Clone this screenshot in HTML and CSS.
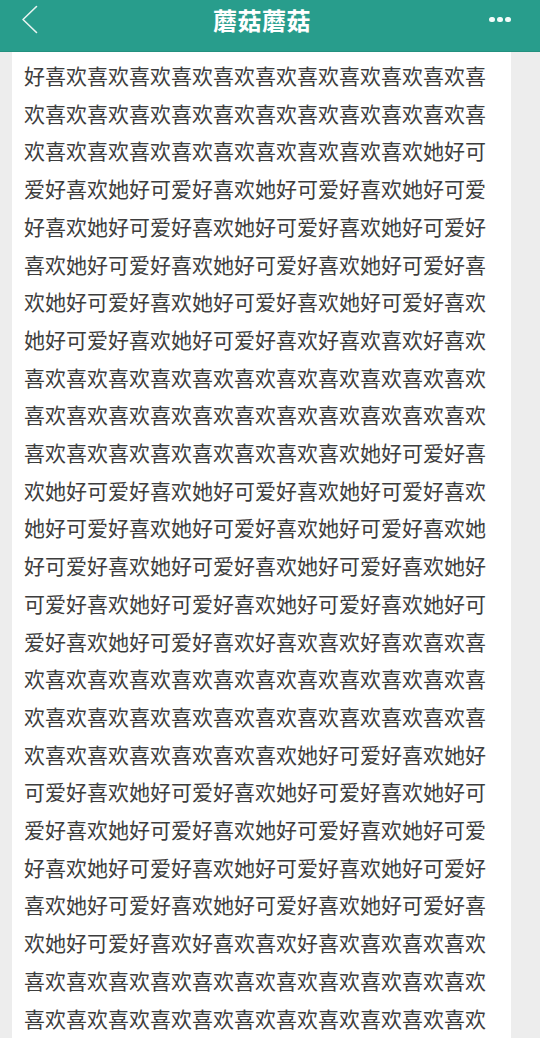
FILE: index.html
```html
<!DOCTYPE html>
<html lang="zh-CN">
<head>
<meta charset="utf-8">
<title>蘑菇蘑菇</title>
<link rel="stylesheet" href="styles.css">
</head>
<body>
<header class="topbar">
  <a class="back" href="#" aria-label="返回">
    <svg width="18" height="30" viewBox="0 0 18 30"><path d="M15.5 1.5 L2 14.5 L15.5 27.5" fill="none" stroke="#e8f4f1" stroke-width="1.6" stroke-linecap="round" stroke-linejoin="round"/></svg>
  </a>
  <h1 class="title">蘑菇蘑菇</h1>
  <div class="more" aria-label="更多"><span></span><span></span><span></span></div>
</header>
<main class="page">
  <article class="card">
    <p class="content">
      <span class="line">好喜欢喜欢喜欢喜欢喜欢喜欢喜欢喜欢喜欢喜欢喜</span>
      <span class="line">欢喜欢喜欢喜欢喜欢喜欢喜欢喜欢喜欢喜欢喜欢喜</span>
      <span class="line">欢喜欢喜欢喜欢喜欢喜欢喜欢喜欢喜欢喜欢她好可</span>
      <span class="line">爱好喜欢她好可爱好喜欢她好可爱好喜欢她好可爱</span>
      <span class="line">好喜欢她好可爱好喜欢她好可爱好喜欢她好可爱好</span>
      <span class="line">喜欢她好可爱好喜欢她好可爱好喜欢她好可爱好喜</span>
      <span class="line">欢她好可爱好喜欢她好可爱好喜欢她好可爱好喜欢</span>
      <span class="line">她好可爱好喜欢她好可爱好喜欢好喜欢喜欢好喜欢</span>
      <span class="line">喜欢喜欢喜欢喜欢喜欢喜欢喜欢喜欢喜欢喜欢喜欢</span>
      <span class="line">喜欢喜欢喜欢喜欢喜欢喜欢喜欢喜欢喜欢喜欢喜欢</span>
      <span class="line">喜欢喜欢喜欢喜欢喜欢喜欢喜欢喜欢她好可爱好喜</span>
      <span class="line">欢她好可爱好喜欢她好可爱好喜欢她好可爱好喜欢</span>
      <span class="line">她好可爱好喜欢她好可爱好喜欢她好可爱好喜欢她</span>
      <span class="line">好可爱好喜欢她好可爱好喜欢她好可爱好喜欢她好</span>
      <span class="line">可爱好喜欢她好可爱好喜欢她好可爱好喜欢她好可</span>
      <span class="line">爱好喜欢她好可爱好喜欢好喜欢喜欢好喜欢喜欢喜</span>
      <span class="line">欢喜欢喜欢喜欢喜欢喜欢喜欢喜欢喜欢喜欢喜欢喜</span>
      <span class="line">欢喜欢喜欢喜欢喜欢喜欢喜欢喜欢喜欢喜欢喜欢喜</span>
      <span class="line">欢喜欢喜欢喜欢喜欢喜欢喜欢她好可爱好喜欢她好</span>
      <span class="line">可爱好喜欢她好可爱好喜欢她好可爱好喜欢她好可</span>
      <span class="line">爱好喜欢她好可爱好喜欢她好可爱好喜欢她好可爱</span>
      <span class="line">好喜欢她好可爱好喜欢她好可爱好喜欢她好可爱好</span>
      <span class="line">喜欢她好可爱好喜欢她好可爱好喜欢她好可爱好喜</span>
      <span class="line">欢她好可爱好喜欢好喜欢喜欢好喜欢喜欢喜欢喜欢</span>
      <span class="line">喜欢喜欢喜欢喜欢喜欢喜欢喜欢喜欢喜欢喜欢喜欢</span>
      <span class="line">喜欢喜欢喜欢喜欢喜欢喜欢喜欢喜欢喜欢喜欢喜欢</span>
    </p>
  </article>
</main>
</body>
</html>
```

FILE: styles.css
```css
html, body {
  margin: 0;
  padding: 0;
}
body {
  width: 540px;
  height: 1038px;
  overflow: hidden;
  background: #ededed;
  font-family: "Noto Sans CJK SC", "Noto Sans", sans-serif;
}
.topbar {
  height: 52px;
  box-sizing: border-box;
  background: #289d8c;
  border-bottom: 1px solid #23917f;
  display: flex;
  align-items: center;
  padding: 0 29px 12px 21px;
}
.back {
  display: flex;
  width: 18px;
  height: 30px;
}
.title {
  flex: 1;
  margin: 0;
  text-align: center;
  color: #ffffff;
  font-size: 24px;
  font-weight: 700;
  line-height: 30px;
  letter-spacing: 0.5px;
  padding-right: 4px;
}
.more {
  display: flex;
  gap: 2.5px;
  width: 22px;
}
.more span {
  width: 5.5px;
  height: 5.5px;
  border-radius: 50%;
  background: #f2fbf9;
}
.page {
  padding: 0 29px 0 12px;
}
.card {
  background: #ffffff;
  height: 986px;
  padding: 5px 13px 0 12px;
  box-sizing: border-box;
  overflow: hidden;
}
.content {
  margin: 0;
  font-size: 21px;
  line-height: 37.7px;
  color: #3d3d3d;
  white-space: nowrap;
}
.line {
  display: block;
}
```
